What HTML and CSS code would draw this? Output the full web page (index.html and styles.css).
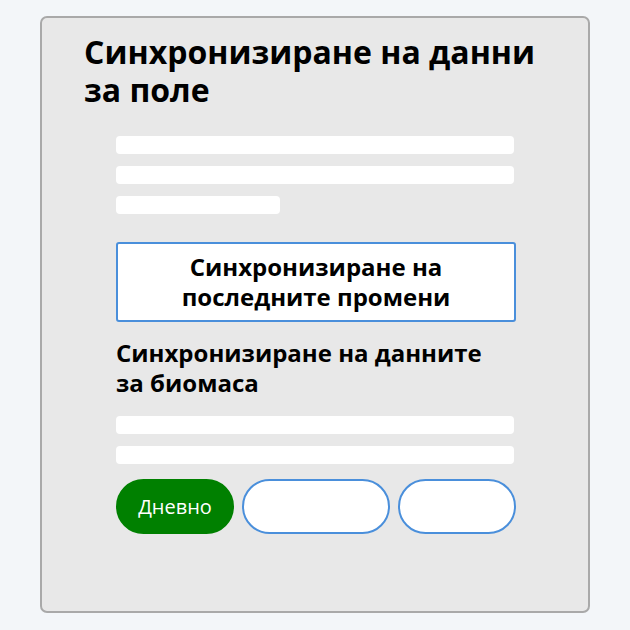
FILE: index.html
```html
<!DOCTYPE html>
<html lang="bg">
<head>
    <meta charset="UTF-8">
    <meta name="viewport" content="width=device-width, initial-scale=1.0">
    <title>Синхронизиране на данни за поле</title>
    <link rel="stylesheet" href="styles.css">
</head>
<body>
    <div class="sync-card">
        <h1>Синхронизиране на данни за поле</h1>

        <div class="sync-body">
            <div class="skeleton-group">
                <div class="skeleton"></div>
                <div class="skeleton"></div>
                <div class="skeleton short"></div>
            </div>

            <button class="sync-button">Синхронизиране на<br>последните промени</button>

            <h2>Синхронизиране на данните<br>за биомаса</h2>

            <div class="skeleton-group">
                <div class="skeleton"></div>
                <div class="skeleton"></div>
            </div>

            <div class="period-options">
                <button class="pill active">Дневно</button>
                <button class="pill wide"></button>
                <button class="pill"></button>
            </div>
        </div>
    </div>
</body>
</html>
```

FILE: styles.css
```css
body {
    font-family: 'Open Sans', 'Noto Sans', sans-serif;
    background: #f3f6f9;
    margin: 0;
    padding: 16px 40px;
}

.sync-card {
    box-sizing: border-box;
    width: 550px;
    height: 597px;
    background: #e8e8e8;
    border: 2px solid #a9a9a9;
    border-radius: 7px;
    padding: 15px 42px;
}

h1 {
    margin: 0 0 27px;
    font-size: 32px;
    line-height: 38px;
    font-weight: 700;
    color: #000;
}

.sync-body {
    width: 400px;
    margin-left: 32px;
}

.skeleton-group {
    display: flex;
    flex-direction: column;
    gap: 12px;
    margin-right: 2px;
}

.skeleton {
    height: 18px;
    background: #fff;
    border-radius: 4px;
}

.skeleton.short {
    width: 164px;
}

.sync-button {
    display: block;
    box-sizing: border-box;
    width: 400px;
    height: 80px;
    margin-top: 28px;
    background: #fff;
    border: 2px solid #4a8fdb;
    border-radius: 3px;
    font-family: inherit;
    font-size: 24px;
    line-height: 30px;
    font-weight: 700;
    color: #000;
}

h2 {
    margin: 16px 0 18px;
    font-size: 24px;
    line-height: 30px;
    font-weight: 700;
    color: #000;
}

.period-options {
    display: flex;
    gap: 8px;
    margin-top: 15px;
}

.pill {
    box-sizing: border-box;
    width: 118px;
    height: 55px;
    background: #fff;
    border: 2px solid #4a8fdb;
    border-radius: 28px;
    font-family: inherit;
    font-size: 20px;
    color: #fff;
    padding: 0;
}

.pill.wide {
    width: 148px;
}

.pill.active {
    background: #008000;
    border-color: #008000;
}
```
